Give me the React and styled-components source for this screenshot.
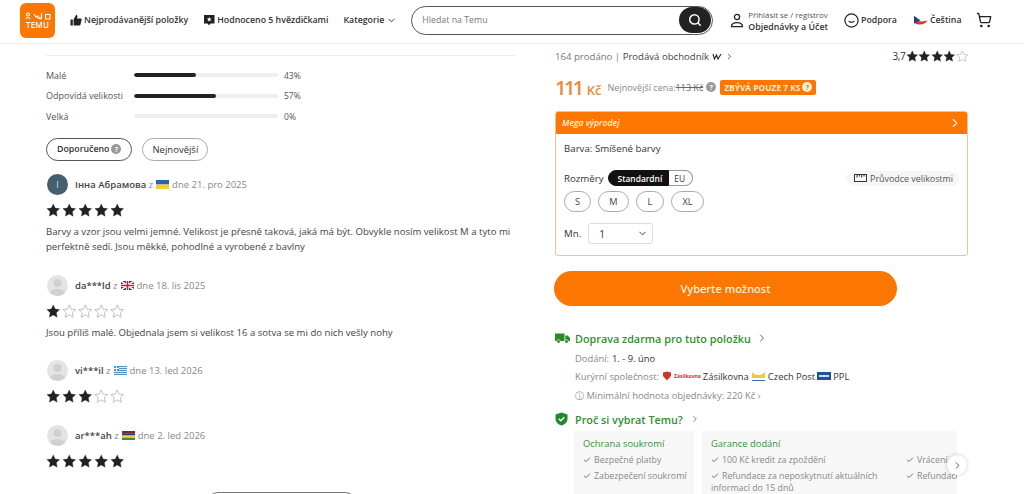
import React from "react";
import styled, { createGlobalStyle } from "styled-components";
import { ChevronDown, ChevronRight, Search, ShoppingCart, Check } from "lucide-react";

const GlobalStyle = createGlobalStyle`
  html, body { margin: 0; padding: 0; background: #fff; overflow: hidden; }
  body { font-family: "Open Sans", "Noto Sans", sans-serif; color: #222; }
  * { box-sizing: border-box; }
`;

const Page = styled.div`
  width: 1024px;
  height: 494px;
  overflow: hidden;
`;

const Header = styled.header`
  height: 44px;
  border-bottom: 1px solid #eee;
  display: flex;
  align-items: center;
  padding: 0 0 3px 20px;
`;

const Logo = styled.div`
  width: 35px;
  height: 35px;
  border-radius: 6px;
  background: #fb7701;
  color: #fff;
  font-size: 8px;
  font-weight: 600;
  line-height: 8px;
  display: flex;
  flex-direction: column;
  align-items: center;
  justify-content: center;
  gap: 1px;
  letter-spacing: 0.2px;
  margin-right: 15px;
`;

const NavItem = styled.div`
  display: flex;
  align-items: center;
  flex: none;
  gap: ${(p) => p.$gap || 2}px;
  font-size: 8.8px;
  font-weight: 600;
  color: #333;
  margin-right: ${(p) => p.$mr || 0}px;
  white-space: nowrap;
`;

const SearchBox = styled.div`
  flex: none;
  width: 302px;
  height: 29px;
  border: 1px solid #555;
  border-radius: 15px;
  display: flex;
  align-items: center;
  justify-content: space-between;
  padding: 0 1px 0 10px;
  margin-right: 17px;
  font-size: 8.8px;
  color: #777;
`;

const SearchBtn = styled.div`
  width: 32px;
  height: 26px;
  border-radius: 13px;
  background: #222;
  color: #fff;
  display: flex;
  align-items: center;
  justify-content: center;
`;

const Account = styled.div`
  font-size: 7.9px;
  font-weight: 400;
  line-height: 12px;
  padding-top: 2px;
  color: #555;
  white-space: nowrap;
  & b { display: block; font-size: 8.8px; font-weight: 600; color: #333; }
`;

const Columns = styled.main`
  display: flex;
  padding-left: 46px;
  gap: 39px;
`;

const LeftCol = styled.section`
  width: 470px;
  padding-top: 11px;
  flex: none;
`;

const RightCol = styled.section`
  width: 413px;
  padding-top: 4px;
  flex: none;
`;

const Divider = styled.div`
  height: 1px;
  background: #eee;
  margin-bottom: 9px;
`;

const FitRow = styled.div`
  display: flex;
  align-items: center;
  height: 20.5px;
  font-size: 9px;
  color: #555;
`;

const FitLabel = styled.span`
  width: 88px;
  white-space: nowrap;
`;

const FitTrack = styled.div`
  width: 144px;
  height: 4px;
  border-radius: 2px;
  background: #eee;
  margin-right: 6px;
  overflow: hidden;
`;

const FitFill = styled.div`
  height: 100%;
  border-radius: 2px;
  background: #222;
`;

const FitValue = styled.span`
  font-size: 8.5px;
`;

const SortRow = styled.div`
  display: flex;
  gap: 10px;
  margin: 11px 0 13px;
`;

const SortBtn = styled.div`
  height: 23px;
  padding: 0 ${(p) => (p.$active ? 10 : 9)}px;
  border: 1px solid ${(p) => (p.$active ? "#555" : "#aaa")};
  border-radius: 12px;
  display: flex;
  align-items: center;
  gap: 2px;
  font-size: ${(p) => (p.$active ? 8.8 : 9.5)}px;
  font-weight: ${(p) => (p.$active ? 600 : 400)};
  color: #333;
`;

const Hint = styled.span`
  width: 10px;
  height: 10px;
  flex: none;
  border-radius: 50%;
  background: ${(p) => (p.$light ? "#ffeeda" : "#999")};
  color: ${(p) => (p.$light ? "#fb7701" : "#fff")};
  font-size: 7px;
  font-weight: 700;
  display: inline-flex;
  align-items: center;
  justify-content: center;
`;

const Review = styled.article`
  height: ${(p) => p.$h}px;
`;

const ReviewHead = styled.div`
  display: flex;
  align-items: center;
  height: 22px;
  padding-left: 1px;
  font-size: 9.5px;
  color: #888;
  white-space: nowrap;
  & b { font-weight: 600; color: #444; }
`;

const Avatar = styled.div`
  width: 21px;
  height: 21px;
  border-radius: 50%;
  background: ${(p) => (p.$dark ? "#465f6e" : "#e4e4e4")};
  margin-right: 7px;
  flex: none;
  color: #dde;
  font-size: 9px;
  display: flex;
  align-items: center;
  justify-content: center;
  overflow: hidden;
`;

const StarRow = styled.div`
  display: flex;
  gap: ${(p) => p.$gap}px;
  margin: ${(p) => (p.$inline ? "0" : "7px 0 0")};
`;

const ReviewText = styled.p`
  margin: 7px 0 0;
  font-size: 9.6px;
  line-height: 15px;
  color: #444;
  white-space: nowrap;
`;

const MoreBtn = styled.div`
  width: 149px;
  height: 22px;
  border: 1px solid #777;
  border-radius: 11px;
  margin-left: 161px;
`;

const SoldRow = styled.div`
  display: flex;
  align-items: center;
  justify-content: space-between;
  height: 16px;
  font-size: 9.6px;
  color: #777;
  & b { font-weight: 400; color: #444; }
`;

const SoldText = styled.span`
  display: flex;
  align-items: center;
  gap: 3px;
`;

const Rating = styled.div`
  display: flex;
  align-items: center;
  color: #333;
  gap: 0;
  font-size: 10px;
  letter-spacing: -0.3px;
`;

const PriceRow = styled.div`
  display: flex;
  align-items: center;
  height: 24px;
  margin-top: 11px;
  white-space: nowrap;
`;

const Price = styled.span`
  font-size: 20px;
  font-weight: 600;
  color: #ea8a3a;
  letter-spacing: -2.5px;
  margin-right: 6px;
  & small { font-size: 13px; letter-spacing: 0; margin-left: 5px; }
`;

const OldPrice = styled.span`
  font-size: 9px;
  color: #888;
  margin-right: 3px;
  & s { color: #666; }
`;

const Badge = styled.span`
  height: 15px;
  margin-left: 4px;
  padding: 0 4px;
  background: #fb7701;
  color: #ffe9c8;
  border-radius: 2px;
  font-size: 8.4px;
  font-weight: 700;
  display: flex;
  align-items: center;
  gap: 2px;
`;

const SkuBox = styled.div`
  width: 413px;
  height: 145px;
  margin-top: 12px;
  border: 1px solid #ecc595;
  border-radius: 3px;
  overflow: hidden;
`;

const SkuHead = styled.div`
  height: 23px;
  margin: -1px -1px 0;
  background: #fb7701;
  color: #ffeeda;
  display: flex;
  align-items: center;
  justify-content: space-between;
  padding: 0 6px 0 7px;
  font-size: 8.6px;
  font-weight: 600;
  font-style: italic;
`;

const SkuBody = styled.div`
  padding: 8px 8px 0 8px;
  font-size: 9.7px;
  color: #333;
`;

const SizeHead = styled.div`
  display: flex;
  align-items: center;
  justify-content: space-between;
  margin-top: 15px;
  height: 16px;
`;

const Toggle = styled.div`
  display: flex;
  align-items: center;
  height: 16px;
`;

const SizeLabel = styled.span`
  margin-right: 4px;
`;

const ToggleOption = styled.span`
  height: 16px;
  display: flex;
  align-items: center;
  font-size: 8.4px;
  font-weight: ${(p) => (p.$on ? 600 : 400)};
  padding: ${(p) => (p.$on ? "0 6px 0 9px" : "0 7px 0 5px")};
  background: ${(p) => (p.$on ? "#111" : "#fff")};
  color: ${(p) => (p.$on ? "#fff" : "#333")};
  border: 1px solid ${(p) => (p.$on ? "#111" : "#999")};
  border-left-width: ${(p) => (p.$on ? 1 : 0)}px;
  border-radius: ${(p) => (p.$on ? "8px 0 0 8px" : "0 8px 8px 0")};
`;

const GuidePill = styled.div`
  height: 15px;
  padding: 0 6px 0 8px;
  border-radius: 8px;
  background: #f6f6f6;
  display: flex;
  align-items: center;
  gap: 3px;
  font-size: 8.9px;
  color: #555;
`;

const SizeRow = styled.div`
  display: flex;
  gap: 7px;
  margin-top: 5px;
`;

const SizeBtn = styled.div`
  height: 21px;
  min-width: ${(p) => p.$w}px;
  border: 1px solid #aaa;
  border-radius: 11px;
  display: flex;
  align-items: center;
  justify-content: center;
  font-size: 9.2px;
  color: #444;
`;

const QtyRow = styled.div`
  display: flex;
  align-items: center;
  margin-top: 11px;
  gap: 7px;
`;

const QtySelect = styled.div`
  width: 65px;
  height: 21px;
  border: 1px solid #ddd;
  border-radius: 3px;
  display: flex;
  align-items: center;
  justify-content: space-between;
  padding: 0 4px 0 10px;
  font-size: 10px;
`;

const BuyBtn = styled.div`
  width: 343px;
  height: 35px;
  margin: 15px 0 0 -1px;
  border-radius: 18px;
  background: #fb7701;
  color: #ffeeda;
  font-size: 11px;
  font-weight: 600;
  display: flex;
  align-items: center;
  justify-content: center;
`;

const GreenTitle = styled.div`
  display: flex;
  align-items: center;
  height: 16px;
  margin-top: ${(p) => p.$mt}px;
  font-size: 10.8px;
  font-weight: 600;
  color: #2f8f2f;
  gap: ${(p) => p.$gap || 5}px;
`;

const Info = styled.div`
  display: flex;
  align-items: center;
  gap: 3px;
  height: 16px;
  margin: ${(p) => p.$mt || 2}px 0 0 20px;
  font-size: 9.4px;
  color: #888;
  white-space: nowrap;
  & b { font-weight: 400; color: #333; }
`;

const Carriers = styled.span`
  display: flex;
  align-items: center;
  gap: 2px;
`;

const CardsWrap = styled.div`
  position: relative;
`;

const Cards = styled.div`
  display: flex;
  gap: 8px;
  width: 383px;
  margin: 4px 0 0 19px;
  overflow: hidden;
`;

const Card = styled.div`
  flex: none;
  width: ${(p) => p.$w}px;
  height: 70px;
  background: #f7f7f7;
  padding: 6px 9px;
  display: flex;
  gap: 12px;
  overflow: hidden;
`;

const CardCol = styled.div`
  flex: none;
  width: ${(p) => p.$w}px;
`;

const CardTitle = styled.div`
  font-size: 9.4px;
  color: #3a8f3a;
  height: 17px;
`;

const Perk = styled.div`
  font-size: 8.8px;
  line-height: 12px;
  color: #888;
  margin-bottom: 4px;
  & svg { vertical-align: -1px; margin-right: 3px; }
`;

const NextBtn = styled.div`
  position: absolute;
  right: 1px;
  top: 24px;
  width: 20px;
  height: 20px;
  border-radius: 50%;
  background: #fff;
  box-shadow: 0 0 4px rgba(0, 0, 0, 0.2);
  display: flex;
  align-items: center;
  justify-content: center;
  color: #444;
`;

const STAR = "M12 1.500l3.200 6.900 7.300.9-5.400 5.100 1.400 7.400L12 18.200l-6.500 3.600 1.400-7.400L1.500 9.300l7.300-.9z";

const Star = ({ on, size }) => (
  <svg width={size} height={size} viewBox="0 0 24 24">
    <path d={STAR} fill={on ? "#222" : "#fff"} stroke={on ? "#222" : "#aaa"} strokeWidth={on ? 0.5 : 1.2} />
  </svg>
);

const Stars = ({ value, size = 14.5, gap = 1.5, inline }) => (
  <StarRow $gap={gap} $inline={inline}>
    {[1, 2, 3, 4, 5].map((n) => (
      <Star key={n} on={n <= value} size={size} />
    ))}
  </StarRow>
);

const FlagSvg = styled.svg`
  margin: 0 3px;
  flex: none;
`;

const Flag = ({ stripes }) => (
  <FlagSvg width="13" height="9" viewBox="0 0 13 9">
    {stripes.map((c, i) => (
      <rect key={i} x="0" y={(i * 9) / stripes.length} width="13" height={9 / stripes.length} fill={c} />
    ))}
  </FlagSvg>
);

const UkFlag = () => (
  <FlagSvg width="13" height="9" viewBox="0 0 13 9">
    <rect width="13" height="9" fill="#2a3f7c" />
    <path d="M0 0l13 9M13 0L0 9" stroke="#fff" strokeWidth="1.600" />
    <path d="M6.500 0v9M0 4.500h13" stroke="#fff" strokeWidth="3" />
    <path d="M6.500 0v9M0 4.500h13" stroke="#c8232c" strokeWidth="1.600" />
  </FlagSvg>
);

const GreekFlag = () => (
  <FlagSvg width="13" height="9" viewBox="0 0 13 9">
    <rect width="13" height="9" fill="#4d8fc9" />
    <path d="M0 1.500h13M0 3.500h13M0 5.500h13M0 7.500h13" stroke="#dfeef8" strokeWidth="1" />
    <rect width="5" height="5" fill="#4d8fc9" />
    <path d="M2.500 0v5M0 2.500h5" stroke="#fff" strokeWidth="1" />
  </FlagSvg>
);

const DefaultFace = () => (
  <svg width="21" height="21" viewBox="0 0 21 21">
    <circle cx="10.500" cy="8" r="4" fill="#d0d0d0" />
    <ellipse cx="10.500" cy="19" rx="8" ry="5" fill="#d0d0d0" />
  </svg>
);

const ThumbIcon = () => (
  <svg width="12" height="12" viewBox="0 0 12 12">
    <path d="M0.500 5.500h2.300v6H0.500zM3.600 5.500L6 1c1 0 1.600.7 1.400 1.700L7 4.500h3.600c.8 0 1.200.7 1 1.400l-1.200 4.800c-.2.5-.5.8-1 .8H3.600z" fill="#222" />
  </svg>
);

const RatedIcon = () => (
  <svg width="12" height="12" viewBox="0 0 12 12">
    <path d="M1 1h10.500v8.500H7.600L6 11.300 4.400 9.500H1z" fill="#222" />
    <path d="M6.200 3l.8 1.500 1.600.2-1.200 1.100.3 1.600-1.500-.8-1.400.8.3-1.600-1.200-1.100 1.600-.2z" fill="#fff" />
  </svg>
);

const UserIcon = () => (
  <svg width="14" height="15" viewBox="0 0 14 15" fill="none" stroke="#222" strokeWidth="1.300">
    <circle cx="7" cy="4" r="2.600" />
    <path d="M1.500 13.600c0-2.600 2-4 5.500-4s5.500 1.400 5.500 4z" />
  </svg>
);

const SmileIcon = () => (
  <svg width="15" height="15" viewBox="0 0 15 15" fill="none" stroke="#222" strokeWidth="1.200">
    <circle cx="7.500" cy="7.500" r="6.600" />
    <path d="M5 8.300c.8 1.500 4.200 1.500 5 0" strokeLinecap="round" />
  </svg>
);

const CzechFlag = () => (
  <svg width="15" height="11" viewBox="0 0 15 11">
    <path d="M1 1c4 2.500 9 2.500 13 3v2.500C11 10 5 11 1 7z" fill="#fff" stroke="#eee" strokeWidth="0.300" />
    <path d="M1 5.500C5 7 10 6.500 14.500 5.500 12 10 5 11 1 7.500z" fill="#d7362b" />
    <path d="M1 .8L7.500 5.500 1 8.500z" fill="#23467e" />
  </svg>
);

const LogoMark = () => (
  <svg width="26" height="8" viewBox="0 0 26 8" fill="none" stroke="#fff" strokeWidth="1.100">
    <circle cx="3" cy="2.500" r="1.500" />
    <path d="M1 7c1-2 3-2 4 0" />
    <path d="M9 2l2 3 2-1v3" />
    <path d="M16.500 1v5M16.500 6a1 1 0 1 1-1-1" />
    <path d="M20.500 2.500h4.500v4.500h-4.500z" />
  </svg>
);

const SellerMark = () => (
  <svg width="10" height="7" viewBox="0 0 10 7" fill="none" stroke="#333" strokeWidth="1.200">
    <path d="M1 1l1.500 5L4.500 2 6 6l3-5" />
  </svg>
);

const RulerIcon = () => (
  <svg width="13" height="8" viewBox="0 0 13 8" fill="none" stroke="#333" strokeWidth="1">
    <rect x="0.500" y="0.500" width="12" height="7" />
    <path d="M3 .5v3M5.300 .5v2M7.600 .5v3M10 .5v2" />
  </svg>
);

const TruckIcon = () => (
  <svg width="15" height="12" viewBox="0 0 15 12" fill="#2a8a2a">
    <path d="M0 1.500h9.500v7.500H0zM10.300 3.500h2.500l2.200 2.500v3h-4.700z" />
    <circle cx="3.500" cy="9.500" r="1.800" stroke="#fff" strokeWidth="0.600" />
    <circle cx="11.500" cy="9.500" r="1.800" stroke="#fff" strokeWidth="0.600" />
  </svg>
);

const ShieldIcon = () => (
  <svg width="13" height="14" viewBox="0 0 13 14">
    <path d="M6.500 .5L12.500 2.500v4c0 3.500-2.500 6-6 7-3.500-1-6-3.500-6-7v-4z" fill="#1f8a2a" />
    <path d="M3.800 6.800l2 2 3.500-3.500" stroke="#fff" strokeWidth="1.300" fill="none" />
  </svg>
);

const ZasilkovnaMark = () => (
  <svg width="10" height="10" viewBox="0 0 10 10">
    <path d="M5 9.500L1 5V1.500L5 .5 9 1.500V5z" fill="#c8362c" />
  </svg>
);

const CarrierTag = styled.span`
  font-size: 5px;
  font-weight: 700;
  color: #d8282c;
`;

const PostMark = () => (
  <svg width="15" height="11" viewBox="0 0 15 11">
    <path d="M1 1c3 4 9 4 13 0v6H1z" fill="#f0c93a" />
    <path d="M1 9.500h13" stroke="#3a6bb0" strokeWidth="1" />
  </svg>
);

const PplMark = () => (
  <svg width="14" height="8" viewBox="0 0 14 8">
    <rect width="14" height="8" fill="#21509e" />
    <rect x="2" y="3" width="10" height="2" fill="#cfe0f5" />
  </svg>
);

const fits = [
  { label: "Malé", value: 43 },
  { label: "Odpovídá velikosti", value: 57 },
  { label: "Velká", value: 0 },
];

const GreenCheck = () => <Check size={8} color="#3a9a3a" strokeWidth={3} />;

export default function App() {
  return (
    <Page>
      <GlobalStyle />
      <Header>
        <Logo>
          <LogoMark />
          <span>TEMU</span>
        </Logo>
        <NavItem $mr={15}>
          <ThumbIcon />
          Nejprodávanější položky
        </NavItem>
        <NavItem $mr={15}>
          <RatedIcon />
          Hodnoceno 5 hvězdičkami
        </NavItem>
        <NavItem $mr={14}>
          Kategorie <ChevronDown size={11} />
        </NavItem>
        <SearchBox>
          Hledat na Temu
          <SearchBtn>
            <Search size={14} strokeWidth={2.5} />
          </SearchBtn>
        </SearchBox>
        <NavItem $mr={16} $gap={4}>
          <UserIcon />
          <Account>
            Přihlásit se / registrov
            <b>Objednávky a Účet</b>
          </Account>
        </NavItem>
        <NavItem $mr={16}>
          <SmileIcon />
          Podpora
        </NavItem>
        <NavItem $mr={14}>
          <CzechFlag />
          Čeština
        </NavItem>
        <ShoppingCart size={16} color="#222" />
      </Header>
      <Columns>
        <LeftCol>
          <Divider />
          {fits.map((f) => (
            <FitRow key={f.label}>
              <FitLabel>{f.label}</FitLabel>
              <FitTrack>
                <FitFill style={{ width: `${f.value}%` }} />
              </FitTrack>
              <FitValue>{f.value}%</FitValue>
            </FitRow>
          ))}
          <SortRow>
            <SortBtn $active>
              Doporučeno <Hint>?</Hint>
            </SortBtn>
            <SortBtn>Nejnovější</SortBtn>
          </SortRow>
          <Review $h={101}>
            <ReviewHead>
              <Avatar $dark>І</Avatar>
              <b>Інна Абрамова</b>&nbsp;z
              <Flag stripes={["#2b62b8", "#f5cf2c"]} />
              dne 21. pro 2025
            </ReviewHead>
            <Stars value={5} />
            <ReviewText>
              Barvy a vzor jsou velmi jemné. Velikost je přesně taková, jaká má být. Obvykle nosím velikost M a tyto mi
              <br />
              perfektně sedí. Jsou měkké, pohodlné a vyrobené z bavlny
            </ReviewText>
          </Review>
          <Review $h={85}>
            <ReviewHead>
              <Avatar>
                <DefaultFace />
              </Avatar>
              <b>da***ld</b>&nbsp;z
              <UkFlag />
              dne 18. lis 2025
            </ReviewHead>
            <Stars value={1} />
            <ReviewText>Jsou příliš malé. Objednala jsem si velikost 16 a sotva se mi do nich vešly nohy</ReviewText>
          </Review>
          <Review $h={65}>
            <ReviewHead>
              <Avatar>
                <DefaultFace />
              </Avatar>
              <b>vi***il</b>&nbsp;z
              <GreekFlag />
              dne 13. led 2026
            </ReviewHead>
            <Stars value={3} />
          </Review>
          <Review $h={67}>
            <ReviewHead>
              <Avatar>
                <DefaultFace />
              </Avatar>
              <b>ar***ah</b>&nbsp;z
              <Flag stripes={["#8c1c3c", "#1f3a7a", "#e8d040", "#3f8f3a"]} />
              dne 2. led 2026
            </ReviewHead>
            <Stars value={5} />
          </Review>
          <MoreBtn />
        </LeftCol>
        <RightCol>
          <SoldRow>
            <SoldText>
              <span>
                164 prodáno | <b>Prodává obchodník</b>
              </span>
              <SellerMark />
              <ChevronRight size={9} color="#333" />
            </SoldText>
            <Rating>
              3,7
              <Stars value={4} size={12.5} gap={0} inline />
            </Rating>
          </SoldRow>
          <PriceRow>
            <Price>
              111<small>Kč</small>
            </Price>
            <OldPrice>
              Nejnovější cena:<s>113 Kč</s>
            </OldPrice>
            <Hint>?</Hint>
            <Badge>
              ZBÝVÁ POUZE 7 KS <Hint $light>?</Hint>
            </Badge>
          </PriceRow>
          <SkuBox>
            <SkuHead>
              Mega výprodej
              <ChevronRight size={14} />
            </SkuHead>
            <SkuBody>
              <div>Barva: Smíšené barvy</div>
              <SizeHead>
                <Toggle>
                  <SizeLabel>Rozměry</SizeLabel>
                  <ToggleOption $on>Standardní</ToggleOption>
                  <ToggleOption>EU</ToggleOption>
                </Toggle>
                <GuidePill>
                  <RulerIcon />
                  Průvodce velikostmi
                </GuidePill>
              </SizeHead>
              <SizeRow>
                <SizeBtn $w={27}>S</SizeBtn>
                <SizeBtn $w={31}>M</SizeBtn>
                <SizeBtn $w={28}>L</SizeBtn>
                <SizeBtn $w={33}>XL</SizeBtn>
              </SizeRow>
              <QtyRow>
                Mn.
                <QtySelect>
                  1 <ChevronDown size={11} />
                </QtySelect>
              </QtyRow>
            </SkuBody>
          </SkuBox>
          <BuyBtn>Vyberte možnost</BuyBtn>
          <GreenTitle $mt={24}>
            <TruckIcon />
            Doprava zdarma pro tuto položku <ChevronRight size={12} />
          </GreenTitle>
          <Info $mt={4}>
            Dodání: <b>1. - 9. úno</b>
          </Info>
          <Info>
            Kurýrní společnost:
            <Carriers>
              <ZasilkovnaMark />
              <CarrierTag>Zásilkovna</CarrierTag>
              <b>Zásilkovna</b>
              <PostMark />
              <b>Czech Post</b>
              <PplMark />
              <b>PPL</b>
            </Carriers>
          </Info>
          <Info $mt={4}>ⓘ Minimální hodnota objednávky: 220 Kč ›</Info>
          <GreenTitle $mt={7} $gap={7}>
            <ShieldIcon />
            Proč si vybrat Temu? <ChevronRight size={10} />
          </GreenTitle>
          <CardsWrap>
            <Cards>
              <Card $w={120}>
                <CardCol $w={104}>
                  <CardTitle>Ochrana soukromí</CardTitle>
                  <Perk>
                    <GreenCheck />
                    Bezpečné platby
                  </Perk>
                  <Perk>
                    <GreenCheck />
                    Zabezpečení soukromí
                  </Perk>
                </CardCol>
              </Card>
              <Card $w={255}>
                <CardCol $w={183}>
                  <CardTitle>Garance dodání</CardTitle>
                  <Perk>
                    <GreenCheck />
                    100 Kč kredit za zpoždění
                  </Perk>
                  <Perk>
                    <GreenCheck />
                    Refundace za neposkytnutí aktuálních informací do 15 dnů
                  </Perk>
                </CardCol>
                <CardCol $w={100}>
                  <CardTitle />
                  <Perk>
                    <GreenCheck />
                    Vrácení
                  </Perk>
                  <Perk>
                    <GreenCheck />
                    Refundace
                  </Perk>
                </CardCol>
              </Card>
            </Cards>
            <NextBtn>
              <ChevronRight size={11} />
            </NextBtn>
          </CardsWrap>
        </RightCol>
      </Columns>
    </Page>
  );
}
